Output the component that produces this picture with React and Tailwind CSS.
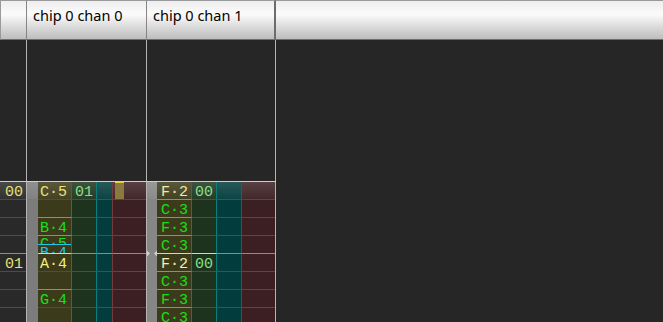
const GREEN = 'border-t-[#14e014]';
const YELLOW = 'border-t-[#f0e040]';

const rows = [
  {
    num: '00',
    c0: { note: 'C·5', text: 'text-[#ece070]', ins: '01', mark: true },
    c1: { note: 'F·2', text: 'text-[#f4eaa0]', ins: '00' },
  },
  { c0: {}, c1: { note: 'C·3', line: GREEN } },
  { c0: { note: 'B·4', line: GREEN }, c1: { note: 'F·3', line: GREEN } },
  { c0: { split: true }, c1: { note: 'C·3', line: GREEN } },
  {
    num: '01',
    c0: { note: 'A·4', text: 'text-[#f2f07a]', line: YELLOW },
    c1: { note: 'F·2', text: 'text-[#f6f0b0]', line: YELLOW, ins: '00', insLine: YELLOW },
  },
  { c0: {}, c1: { note: 'C·3', line: GREEN } },
  { c0: { note: 'G·4', line: GREEN }, c1: { note: 'F·3', line: GREEN } },
  { c0: {}, c1: { note: 'C·3', line: GREEN } },
];

const W0 = {
  box: 'w-[120px]',
  strip: 'w-[11px] bg-[#7c7c7c]',
  note: 'w-[34px] pl-[2px]',
  ins: 'w-[25px] pl-[3px]',
  vol: 'w-[16px]',
  fx: 'w-[33px]',
};
const W1 = {
  box: 'w-[129px]',
  strip: 'w-[10px] bg-[#868686]',
  note: 'w-[35px] pl-[4px]',
  ins: 'w-[25px] pl-[3px]',
  vol: 'w-[25px]',
  fx: 'w-[33px]',
};

function Chan({ c, w, tw, tc, hi, arrow }) {
  return (
    <div className={`flex ${w.box} border-r border-[#b4b4b4]`}>
      <div className={`relative h-full ${w.strip} ${hi}`}>
        {arrow && (
          <svg className="absolute left-0 top-[-3px]" width="10" height="7" viewBox="0 0 10 7">
            <polygon points="0,0.5 3,3.5 0,6.5" fill="#cfcfcf" />
            <polygon points="10,0.5 7,3.5 10,6.5" fill="#cfcfcf" />
          </svg>
        )}
      </div>
      {c.split ? (
        <div className={`w-[34px] h-full flex flex-col bg-[#3b3a1b] border-t border-r ${GREEN} border-r-[#3e6a3e]`}>
          <div className="h-[8px] overflow-hidden pl-[2px] leading-[17px] text-[#16e016]">C·5</div>
          <div className="h-[9px] overflow-hidden pl-[2px] leading-[17px] text-[#22c4e6] border-t border-t-[#22c4e6]">B·4</div>
        </div>
      ) : (
        <div className={`h-full ${w.note} bg-[#3b3a1b] ${hi} ${tw} border-r border-r-[#3e6a3e] ${c.line || tc} leading-[21px] ${c.text || 'text-[#16e016]'}`}>
          {c.note}
        </div>
      )}
      <div className={`h-full ${w.ins} bg-[#1e331e] ${hi} ${tw} border-r border-r-[#0b7d7d] ${c.insLine || tc} leading-[21px] text-[#86e086]`}>
        {c.ins}
      </div>
      <div className={`h-full ${w.vol} bg-[#023c3c] ${hi} ${tw} border-r border-r-[#703c3c] ${tc}`} />
      <div className={`h-full ${w.fx} bg-[#3b1f22] ${hi} ${tw} ${tc}`}>
        {c.mark && <div className="ml-[2px] w-[9px] h-full bg-[#8a7a3e] border-t border-[#e8d040]" />}
      </div>
    </div>
  );
}

function Row({ r, i }) {
  const first = i === 0;
  const tw = first ? '' : 'border-t';
  const tc = i === 4 ? 'border-t-[#8c8c8c]' : 'border-t-[#4c4c4c]';
  const hi = first ? 'bg-linear-to-b from-white/15 to-white/[0.04]' : '';
  return (
    <div className={`flex ${first ? 'h-[17px]' : 'h-[18px]'}`}>
      <div className="w-[27px] border-r border-[#b4b4b4]">
        <div className={`h-full bg-[#292929] ${hi} ${tw} ${tc} pl-[5px] leading-[21px] text-[#e6e070]`}>{r.num}</div>
      </div>
      <Chan c={r.c0} w={W0} tw={tw} tc={tc} hi={hi} />
      <Chan c={r.c1} w={W1} tw={tw} tc={tc} hi={hi} arrow={i === 4} />
    </div>
  );
}

const HEAD = 'h-full bg-linear-to-b from-[#eeeeee] via-[#fbfbfb] via-35% to-[#bdbdbd] border-t border-b border-t-[#9a9a9a] border-b-[#6e6e6e]';

export default function App() {
  return (
    <div className="w-[663px] h-[322px] overflow-hidden bg-[#262626] flex flex-col">
      <div className="flex h-[40px] shrink-0 font-['Noto_Sans',sans-serif] text-[14.5px] leading-[20px] text-black">
        <div className={`w-[27px] ${HEAD} border-l border-r border-l-[#9a9a9a] border-r-[#858585]`} />
        <div className={`w-[120px] ${HEAD} border-r border-r-[#858585] pl-[6px] pt-[4px]`}>chip 0 chan 0</div>
        <div className={`w-[129px] ${HEAD} border-r-2 border-r-[#6c6c6c] pl-[6px] pt-[4px]`}>chip 0 chan 1</div>
        <div className={`flex-1 ${HEAD}`} />
      </div>
      <div className="flex flex-col font-['Liberation_Mono',monospace] text-[15px]">
        <div className="flex w-[276px] h-[142px] shrink-0 border-b border-[#cfcfcf]">
          <div className="w-[27px] border-r border-[#b4b4b4]" />
          <div className="w-[120px] border-r border-[#b4b4b4]" />
          <div className="w-[129px] border-r border-[#b4b4b4]" />
        </div>
        {rows.map((r, i) => (
          <Row key={i} r={r} i={i} />
        ))}
      </div>
    </div>
  );
}
